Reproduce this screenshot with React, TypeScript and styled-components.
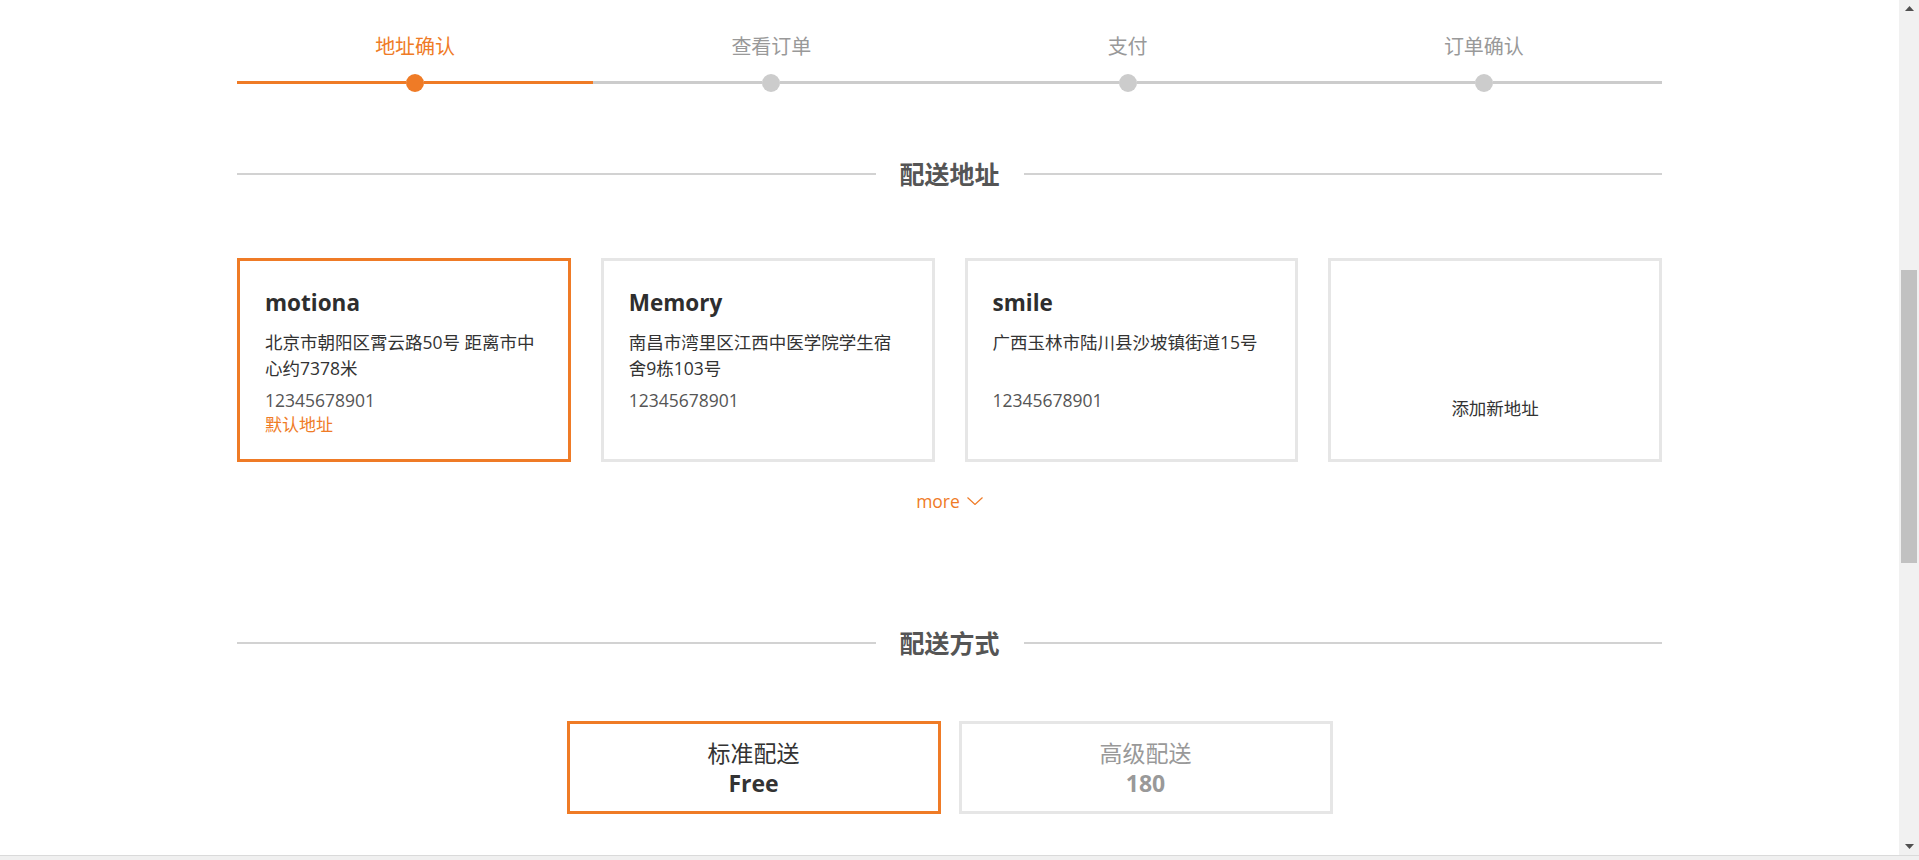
import React from "react";
import styled, { createGlobalStyle } from "styled-components";

const ORANGE = "#ef7b26";

const GlobalStyle = createGlobalStyle`
  html, body {
    margin: 0;
    padding: 0;
    overflow: hidden;
    background: #fff;
    font-family: "Open Sans", "Noto Sans CJK SC", sans-serif;
  }
  * { box-sizing: border-box; }
`;

const Frame = styled.div`
  height: 860px;
  display: grid;
  grid-template-columns: 1fr 20px;
  grid-template-rows: 855px 1fr;
`;

const Viewport = styled.div`
  overflow: hidden;
  background: #fff;
`;

const Scrollbar = styled.div`
  display: flex;
  flex-direction: column;
  background: #f1f1f1;
`;

const ScrollButton = styled.div`
  flex: none;
  height: 17px;
  display: flex;
  align-items: center;
  justify-content: center;
`;

const ScrollTrack = styled.div<{ $offset: number }>`
  flex: 1;
  padding: ${(p) => p.$offset}px 2px 0;
`;

const ScrollThumb = styled.div<{ $size: number }>`
  height: ${(p) => p.$size}px;
  background: #c1c1c1;
`;

const WindowEdge = styled.div`
  grid-column: 1 / -1;
  background: #f0f0f0;
  border-top: 1px solid #dadada;
`;

const Checkout = styled.main`
  width: 1425px;
  margin: 0 auto;
  padding-top: 33px;
`;

const Steps = styled.ol`
  list-style: none;
  margin: 0;
  padding: 0;
  display: grid;
  grid-template-columns: repeat(4, 1fr);
`;

const Step = styled.li`
  display: flex;
  flex-direction: column;
`;

const StepLabel = styled.span<{ $active: boolean }>`
  text-align: center;
  font-size: 20px;
  line-height: 28px;
  margin-bottom: 12px;
  color: ${(p) => (p.$active ? ORANGE : "#999")};
`;

const StepTrack = styled.div`
  display: flex;
  align-items: center;
  height: 19px;
`;

const Segment = styled.span<{ $on: boolean }>`
  flex: 1;
  height: 3px;
  background: ${(p) => (p.$on ? ORANGE : "#cccccc")};
`;

const Dot = styled.span<{ $on: boolean }>`
  flex: none;
  width: 18px;
  height: 18px;
  border-radius: 50%;
  background: ${(p) => (p.$on ? ORANGE : "#cccccc")};
`;

const SectionHeading = styled.h2<{ $gap: number }>`
  display: flex;
  align-items: center;
  gap: 24px;
  margin: ${(p) => p.$gap}px 0 0;
  font-size: 25px;
  line-height: 34px;
  font-weight: 700;
  color: #555;

  &::before,
  &::after {
    content: "";
    flex: 1;
    height: 2px;
    background: #d2d2d2;
  }
`;

const CardGrid = styled.div`
  display: grid;
  grid-template-columns: repeat(4, 1fr);
  gap: 30px;
  margin-top: 67px;
`;

const AddressCard = styled.div<{ $selected?: boolean }>`
  height: 204px;
  border: 3px solid ${(p) => (p.$selected ? ORANGE : "#e6e6e6")};
  padding: 27px 25px 0;
  display: flex;
  flex-direction: column;
  background: #fff;
  cursor: pointer;
`;

const AddCard = styled(AddressCard)`
  justify-content: flex-end;
  align-items: center;
  padding: 0 25px 39px;
`;

const Name = styled.div`
  font-size: 22.5px;
  line-height: 30px;
  font-weight: 700;
  color: #2e2e2e;
`;

const Address = styled.div`
  margin-top: 11px;
  height: 52px;
  font-size: 17.5px;
  line-height: 26px;
  color: #333;
`;

const Phone = styled.div`
  margin-top: 7px;
  font-size: 17.5px;
  line-height: 24px;
  color: #555;
`;

const DefaultTag = styled.div`
  font-size: 17px;
  line-height: 25px;
  color: ${ORANGE};
`;

const AddText = styled.div`
  font-size: 17.5px;
  line-height: 24px;
  color: #333;
`;

const MoreButton = styled.button`
  display: flex;
  align-items: center;
  gap: 7px;
  margin: 27px auto 0;
  padding: 0;
  border: none;
  background: none;
  font-family: inherit;
  font-size: 17.5px;
  line-height: 24px;
  color: ${ORANGE};
  cursor: pointer;
`;

const DeliveryRow = styled.div`
  display: flex;
  justify-content: center;
  gap: 18px;
  margin-top: 61px;
`;

const DeliveryOption = styled.div<{ $selected: boolean }>`
  width: 374px;
  height: 93px;
  border: 3px solid ${(p) => (p.$selected ? ORANGE : "#e6e6e6")};
  display: flex;
  flex-direction: column;
  align-items: center;
  justify-content: center;
  color: ${(p) => (p.$selected ? "#333" : "#999")};
  cursor: pointer;
`;

const OptionName = styled.div`
  font-size: 23px;
  line-height: 30px;
`;

const OptionPrice = styled.div`
  font-size: 23px;
  line-height: 30px;
  font-weight: 700;
`;

const steps = ["地址确认", "查看订单", "支付", "订单确认"];
const activeStep = 0;

const addresses = [
  { name: "motiona", address: "北京市朝阳区霄云路50号 距离市中心约7378米", phone: "12345678901", isDefault: true },
  { name: "Memory", address: "南昌市湾里区江西中医学院学生宿舍9栋103号", phone: "12345678901", isDefault: false },
  { name: "smile", address: "广西玉林市陆川县沙坡镇街道15号", phone: "12345678901", isDefault: false },
];

const deliveries = [
  { name: "标准配送", price: "Free" },
  { name: "高级配送", price: "180" },
];

function Chevron() {
  return (
    <svg width="16" height="8" viewBox="0 0 16 8" fill="none">
      <polyline points="0.5,0.5 8,7.5 15.5,0.5" stroke={ORANGE} strokeWidth="1.2" />
    </svg>
  );
}

function Arrow({ down }: { down?: boolean }) {
  return (
    <svg width="9" height="5" viewBox="0 0 9 5">
      <polygon points={down ? "0,0 9,0 4.5,5" : "4.5,0 9,5 0,5"} fill="#505050" />
    </svg>
  );
}

export default function App() {
  return (
    <Frame>
      <GlobalStyle />
      <Viewport>
        <Checkout>
          <Steps>
            {steps.map((s, i) => (
              <Step key={s}>
                <StepLabel $active={i === activeStep}>{s}</StepLabel>
                <StepTrack>
                  <Segment $on={i <= activeStep} />
                  <Dot $on={i <= activeStep} />
                  <Segment $on={i <= activeStep} />
                </StepTrack>
              </Step>
            ))}
          </Steps>

          <SectionHeading $gap={65}>配送地址</SectionHeading>

          <CardGrid>
            {addresses.map((a, i) => (
              <AddressCard key={a.name} $selected={i === 0}>
                <Name>{a.name}</Name>
                <Address>{a.address}</Address>
                <Phone>{a.phone}</Phone>
                {a.isDefault && <DefaultTag>默认地址</DefaultTag>}
              </AddressCard>
            ))}
            <AddCard>
              <AddText>添加新地址</AddText>
            </AddCard>
          </CardGrid>

          <MoreButton type="button">
            more
            <Chevron />
          </MoreButton>

          <SectionHeading $gap={113}>配送方式</SectionHeading>

          <DeliveryRow>
            {deliveries.map((d, i) => (
              <DeliveryOption key={d.name} $selected={i === 0}>
                <OptionName>{d.name}</OptionName>
                <OptionPrice>{d.price}</OptionPrice>
              </DeliveryOption>
            ))}
          </DeliveryRow>
        </Checkout>
      </Viewport>
      <Scrollbar>
        <ScrollButton>
          <Arrow />
        </ScrollButton>
        <ScrollTrack $offset={253}>
          <ScrollThumb $size={293} />
        </ScrollTrack>
        <ScrollButton>
          <Arrow down />
        </ScrollButton>
      </Scrollbar>
      <WindowEdge />
    </Frame>
  );
}
